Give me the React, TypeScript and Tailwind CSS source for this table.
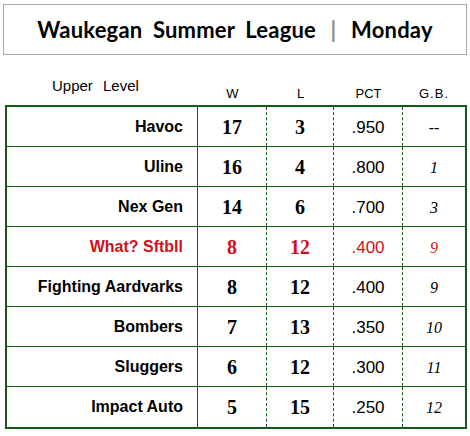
import React from 'react';

type Row = { team: string; w: number; l: number; pct: string; gb: string; hot?: boolean };

const rows: Row[] = [
  { team: 'Havoc', w: 17, l: 3, pct: '.950', gb: '--' },
  { team: 'Uline', w: 16, l: 4, pct: '.800', gb: '1' },
  { team: 'Nex Gen', w: 14, l: 6, pct: '.700', gb: '3' },
  { team: 'What? Sftbll', w: 8, l: 12, pct: '.400', gb: '9', hot: true },
  { team: 'Fighting Aardvarks', w: 8, l: 12, pct: '.400', gb: '9' },
  { team: 'Bombers', w: 7, l: 13, pct: '.350', gb: '10' },
  { team: 'Sluggers', w: 6, l: 12, pct: '.300', gb: '11' },
  { team: 'Impact Auto', w: 5, l: 15, pct: '.250', gb: '12' },
];

const cols = 'grid grid-cols-[191px_69px_67px_69px_62px]';

export default function App() {
  return (
    <div className="w-[470px] h-[436px] bg-white pt-[4px] font-['Liberation_Sans',Arial,sans-serif] text-black">
      <div className="mx-[3px] h-[51px] border border-[#a9a9a9] flex items-center justify-center">
        <h1 className="font-['Lato',sans-serif] font-bold text-[22px] [word-spacing:5px] tracking-[0.2px]">
          Waukegan Summer League <span className="text-[#8a8a8a] mx-[4px]">|</span> Monday
        </h1>
      </div>

      <div className="ml-[5px] h-[50px] flex items-end pb-[5px]">
        <div className="w-[193px] text-[15px] pl-[47px] pb-[7px] [word-spacing:6px] leading-none">Upper Level</div>
        <div className="w-[69px] text-center text-[13px] leading-none">W</div>
        <div className="w-[67px] text-center text-[13px] leading-none">L</div>
        <div className="w-[69px] text-center text-[13px] leading-none">PCT</div>
        <div className="w-[62px] text-center text-[13px] leading-none tracking-[1px]">G.B.</div>
      </div>

      <div className="ml-[5px] w-[462px] border-2 border-[#14591a]">
        {rows.map((r, i) => (
          <div
            key={i}
            className={`${cols} h-[40px] ${i < rows.length - 1 ? 'border-b border-[#14591a]' : ''} ${r.hot ? 'text-[#d0101a]' : 'text-black'}`}
          >
            <div className="flex items-center justify-end pr-[14px] border-r border-[#14591a] font-bold text-[16px]">
              {r.team}
            </div>
            <div className="flex items-center justify-center border-r border-dashed border-[#14591a] font-['Liberation_Serif',serif] font-bold text-[20px]">
              {r.w}
            </div>
            <div className="flex items-center justify-center border-r border-dashed border-[#14591a] font-['Liberation_Serif',serif] font-bold text-[20px]">
              {r.l}
            </div>
            <div className="flex items-center justify-center border-r border-dashed border-[#14591a] text-[17px] pt-[2px]">
              {r.pct}
            </div>
            <div className="flex items-center justify-center font-['Liberation_Serif',serif] italic text-[16px] pt-[2px]">
              {r.gb}
            </div>
          </div>
        ))}
      </div>
    </div>
  );
}
